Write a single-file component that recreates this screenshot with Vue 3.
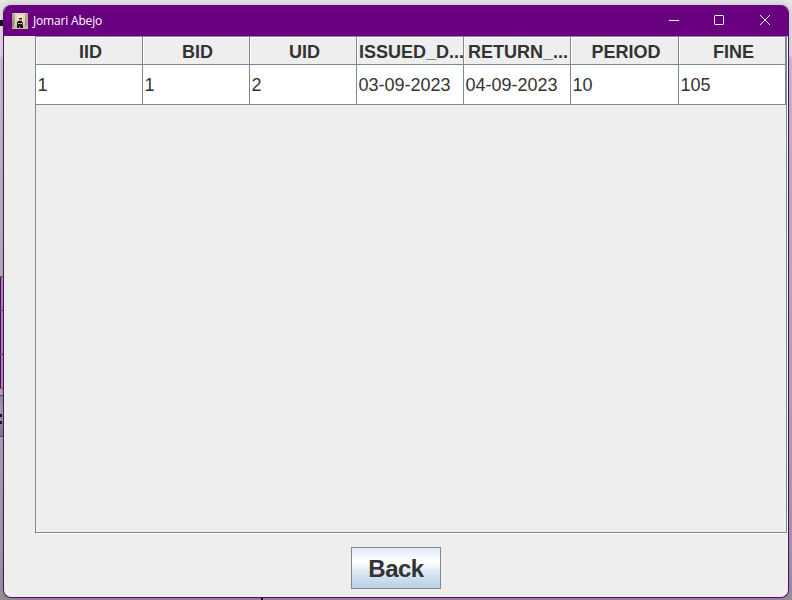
<script setup>
const columns = [
  { title: 'IID', value: '1' },
  { title: 'BID', value: '1' },
  { title: 'UID', value: '2' },
  { title: 'ISSUED_D...', value: '03-09-2023', clipped: true },
  { title: 'RETURN_...', value: '04-09-2023', clipped: true },
  { title: 'PERIOD', value: '10' },
  { title: 'FINE', value: '105' },
]
</script>

<template>
  <div class="desktop">
    <div class="behind-tab"></div>
    <div class="behind-panel"></div>
    <div class="behind-button"><b></b><b></b></div>
    <div class="behind-mark"></div>
    <section class="window">
      <header class="titlebar">
        <svg class="app-icon" width="16" height="16" viewBox="0 0 16 16" shape-rendering="crispEdges">
          <rect width="16" height="16" fill="#b5a591" />
          <path d="M2 0h12v1H2zM3 1h10v11H3z" fill="#e0d3bd" />
          <path d="M5 2h6v8H5z" fill="#efe5d4" />
          <path d="M0 12h16v4H0z" fill="#cdbda6" />
          <path d="M0 6h2v9H0zM13 6h1v8h-1z" fill="#a28d7a" />
          <path d="M7 5h3v1H7zM6 8h4v2H6zM5 9h1v4H5zM6 11h4v2H6zM5 13h2v2H5zM8 12h3v3H8z" fill="#17151b" />
          <path d="M7 6h3v2H7zM5 8h1v1H5zM7 10h2v1H7z" fill="#c48767" />
          <path d="M10 9h1v3h-1zM7 13h1v1H7z" fill="#645044" />
        </svg>
        <span class="title">Jomari Abejo</span>
        <svg class="controls" width="104" height="12" viewBox="0 0 104 12" fill="none" stroke="#fff">
          <path d="M1 6.5h10" />
          <rect x="46.5" y="1.5" width="9" height="9" rx=".7" />
          <path d="M92 1l10 10M102 1L92 11" />
        </svg>
      </header>
      <main class="content">
        <div class="scroll">
          <div class="table">
            <div v-for="c in columns" :key="c.title" class="head" :class="{ clipped: c.clipped }">{{ c.title }}</div>
            <div v-for="c in columns" :key="c.title + 'v'" class="cell">{{ c.value }}</div>
          </div>
        </div>
        <button class="back">Back</button>
      </main>
    </section>
  </div>
</template>

<style>
body { margin: 0; overflow: hidden; }
</style>

<style scoped>
.desktop {
  position: relative;
  box-sizing: border-box;
  width: 792px;
  height: 600px;
  padding: 5px 3px 2px;
  overflow: hidden;
  background: linear-gradient(#e6e6e6 0, #e0e0e0 56px, #cacaca 58px, #bcbcbc 180px, #b0b0b0 400px, #a0a0a0 560px, #949494 600px);
  font-family: "Liberation Sans", Arial, sans-serif;
}
.behind-tab { position: absolute; left: 0; top: 20px; width: 3px; height: 6px; background: #151515; }
.behind-panel {
  position: absolute;
  left: 0;
  top: 276px;
  box-sizing: border-box;
  width: 3px;
  height: 113px;
  border-top: 1px solid #5d646b;
  border-bottom: 1px solid #5d646b;
  background:
    linear-gradient(#59515f, #59515f) 0 33px / 3px 1px no-repeat,
    linear-gradient(#59515f, #59515f) 0 77px / 3px 1px no-repeat,
    linear-gradient(90deg, #620078 1px, #a49ca6 1px);
}
.behind-button {
  position: absolute;
  left: 0;
  top: 395px;
  box-sizing: border-box;
  width: 3px;
  height: 42px;
  padding-top: 18px;
  border-top: 1px solid #4e5963;
  border-bottom: 1px solid #4e5963;
  background: linear-gradient(#8b96a0, #a0a7ad 30%, #718498);
}
.behind-button b { display: block; width: 2px; height: 3px; margin-bottom: 4px; background: #17191d; }
.behind-mark { position: absolute; left: 261px; top: 598px; width: 2px; height: 2px; background: #000; }
.window {
  position: relative;
  box-sizing: border-box;
  width: 786px;
  height: 593px;
  border: 1px solid #680080;
  border-top: 0;
  border-radius: 8px;
  overflow: hidden;
  background: #eee;
  box-shadow: 0 0 7px rgba(0, 0, 0, .2);
}
.titlebar {
  box-sizing: border-box;
  height: 31px;
  padding: 0 16px 0 8px;
  display: flex;
  align-items: center;
  background: #680080;
  color: #fff;
}
.app-icon { margin-right: 5px; }
.title { font: 12px/16px "Open Sans", "Noto Sans", sans-serif; letter-spacing: -.18px; }
.controls { margin: -1px 0 0 auto; }
.content { display: flex; flex-direction: column; align-items: center; }
.scroll {
  align-self: flex-end;
  box-sizing: border-box;
  width: 753px;
  height: 498px;
  border: 1px solid #7a8a99;
  border-right-color: #fff;
  border-bottom-color: #fff;
  box-shadow: inset -1px -1px #7a8a99;
}
.table {
  display: grid;
  grid-template-columns: repeat(5, 107px) 108px 107px;
  grid-template-rows: 28px 40px;
  width: 750px;
  color: #333;
  font-size: 18px;
}
.head, .cell {
  box-sizing: border-box;
  border-right: 1px solid #7a8a99;
  border-bottom: 1px solid #7a8a99;
  white-space: nowrap;
  overflow: hidden;
}
.head {
  padding-left: 3px;
  background: #eee;
  box-shadow: inset 1px 1px #fff;
  line-height: 30px;
  font-weight: 700;
  text-align: center;
}
.head.clipped { padding-left: 2px; }
.cell { padding-left: 1.4px; background: #fff; line-height: 40px; }
.back {
  box-sizing: border-box;
  width: 90px;
  height: 42px;
  margin: 13px 0 0;
  padding: 2px 0 0;
  border: 1px solid #7a8a99;
  background: linear-gradient(#dde8f3, #fff 30%, #fff 36%, #dce7f2 60%, #b8cfe5);
  color: #333;
  font: 700 24px/38px "Liberation Sans", Arial, sans-serif;
  letter-spacing: -.5px;
}
</style>
